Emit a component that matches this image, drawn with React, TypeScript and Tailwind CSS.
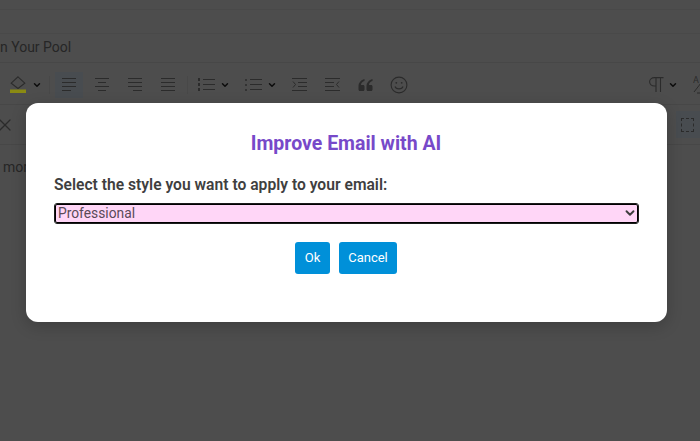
import { ChevronDown, X } from 'lucide-react';

const ink = '#2b2b2b';

function Lines({ widths, align = 'start' }: { widths: number[]; align?: 'start' | 'center' | 'end' }) {
    const alignClass = align === 'center' ? 'items-center' : align === 'end' ? 'items-end' : 'items-start';
    return (
        <div className={`flex flex-col gap-[3px] w-[14px] ${alignClass}`}>
            {widths.map((w, i) => (
                <div key={i} className="h-px bg-[#2b2b2b]" style={{ width: w }} />
            ))}
        </div>
    );
}

function Caret({ className }: { className?: string }) {
    return <ChevronDown size={10} strokeWidth={3.5} color="#0c0c0c" className={className} />;
}

function ListIcon({ numbered }: { numbered?: boolean }) {
    return (
        <div className="flex flex-col gap-[3px] w-[17px]">
            {[0, 1, 2].map((i) => (
                <div key={i} className="flex items-center gap-[3px] h-[2px]">
                    <div className={numbered ? 'w-[2px] h-[3px] bg-[#2b2b2b]' : 'w-[2px] h-[2px] rounded-full bg-[#2b2b2b]'} />
                    <div className="h-px w-[12px] bg-[#2b2b2b]" />
                </div>
            ))}
        </div>
    );
}

function IndentIcon({ flip }: { flip?: boolean }) {
    return (
        <svg width="15" height="13" viewBox="0 0 15 13" fill="none" stroke={ink} strokeWidth="1">
            <path d="M0 .5H15M0 12.5H15" />
            {flip ? <path d="M0 4.5H9M0 8.5H9M14 3.5L11.5 6.5L14 9.5" /> : <path d="M6 4.5H15M6 8.5H15M1 3.5L3.5 6.5L1 9.5" />}
        </svg>
    );
}

function Toolbar() {
    return (
        <div className="h-[40px] shrink-0 flex items-center pl-[10px] border-b border-[#474747]">
            <svg width="16" height="17" viewBox="0 0 16 17" fill="none" stroke={ink} strokeWidth="1.1" className="shrink-0">
                <path d="M8 .8L14.8 7.2L8 12.5L1.2 7.2Z" />
                <rect x="0" y="13.5" width="16" height="3.5" fill="#8a8a12" stroke="none" />
            </svg>
            <Caret className="ml-[6px]" />
            <div className="w-px h-[18px] bg-[#484848] ml-[7px]" />
            <div className="ml-[5px] w-[28px] h-[26px] bg-[#484c50] flex items-center justify-center">
                <Lines widths={[14, 14, 14, 9]} />
            </div>
            <div className="ml-[5px] w-[28px] flex justify-center">
                <Lines widths={[14, 8, 14, 8]} align="center" />
            </div>
            <div className="ml-[5px] w-[28px] flex justify-center">
                <Lines widths={[14, 14, 14, 9]} align="end" />
            </div>
            <div className="ml-[5px] w-[28px] flex justify-center">
                <Lines widths={[14, 14, 14, 14]} />
            </div>
            <div className="w-px h-[18px] bg-[#484848] ml-[5px]" />
            <div className="ml-[10px]"><ListIcon numbered /></div>
            <Caret className="ml-[5px]" />
            <div className="ml-[15px]"><ListIcon /></div>
            <Caret className="ml-[5px]" />
            <div className="ml-[15px]"><IndentIcon /></div>
            <div className="ml-[18px]"><IndentIcon flip /></div>
            <svg width="15" height="12" viewBox="0 0 15 12" fill={ink} className="ml-[18px] shrink-0">
                <path d="M6.5 0C3 1 .5 3.5.5 7.5V10.5C.5 11.3 1 12 2 12H5C6 12 6.5 11.3 6.5 10.5V7.5C6.5 6.7 6 6 5 6H3C3 4 4.5 2.5 6.5 2Z" />
                <path d="M14.5 0C11 1 8.5 3.5 8.5 7.5V10.5C8.5 11.3 9 12 10 12H13C14 12 14.5 11.3 14.5 10.5V7.5C14.5 6.7 14 6 13 6H11C11 4 12.5 2.5 14.5 2Z" />
            </svg>
            <svg width="18" height="18" viewBox="0 0 18 18" fill="none" stroke={ink} strokeWidth="1.1" className="ml-[17px] shrink-0">
                <circle cx="9" cy="9" r="7.9" />
                <path d="M5 10.5C6 13.7 12 13.7 13 10.5" />
                <circle cx="6.3" cy="6.8" r=".9" fill={ink} stroke="none" />
                <circle cx="11.7" cy="6.8" r=".9" fill={ink} stroke="none" />
            </svg>
            <div className="flex-1" />
            <svg width="15" height="15" viewBox="0 0 15 15" fill="none" stroke={ink} strokeWidth="1.1" className="shrink-0">
                <path d="M14.5 .6H5.5C2.7 .6 .6 2.5 .6 4.8C.6 7.1 2.7 9 5.5 9H7M7 .6V15M11.5 .6V15" />
            </svg>
            <Caret className="ml-[4px]" />
            <div className="relative ml-[15px] mr-[-3px] w-[10px] h-[18px] shrink-0 overflow-hidden">
                <span className="absolute left-0 top-[-1px] text-[9px] leading-[10px] text-[#2b2b2b]">A</span>
                <svg width="10" height="18" viewBox="0 0 10 18" fill="none" stroke={ink} strokeWidth="1" className="absolute left-0 top-0">
                    <path d="M8 7L1 16M4 17H10" />
                </svg>
            </div>
        </div>
    );
}

export default function App() {
    return (
        <div className="relative w-[700px] h-[441px] overflow-hidden bg-[#4d4d4d] font-['Roboto',sans-serif]">
            <div className="flex flex-col h-full">
                <div className="h-[10px] shrink-0 border-b border-[#494949]" />
                <div className="h-[24px] shrink-0 border-b border-[#494949]" />
                <div className="h-[29px] shrink-0 pb-[2px] border-b border-[#474747] flex items-center text-[14px] text-[#262626]">
                    <span className="ml-[-8px] whitespace-nowrap">on Your Pool</span>
                </div>
                <div className="h-[2px] shrink-0" />
                <Toolbar />
                <div className="h-[40px] shrink-0 border-b border-[#474747] flex items-center justify-between">
                    <X size={20} strokeWidth={1.5} color={ink} className="ml-[-5px]" />
                    <div className="w-[24px] h-[27px] bg-[#484c50] flex items-center">
                        <div className="ml-[5px] w-[13px] h-[14px] border border-dashed border-[#2b2b2b]" />
                    </div>
                </div>
                <div className="pt-[12px] pl-[3px] text-[14px] text-[#262626]">more</div>
            </div>

            <div className="absolute left-[26px] top-[103px] w-[641px] h-[219px] bg-white rounded-[12px] shadow-[0_4px_16px_rgba(0,0,0,0.2)] flex flex-col items-center pt-[27px]">
                <h2 className="text-[19.5px] leading-[28px] font-bold text-[#7749c9] mr-[1px]">Improve Email with AI</h2>
                <label className="self-start ml-[28px] mt-[15px] text-[15.65px] leading-[24px] font-semibold text-[#3f3f3f]">
                    Select the style you want to apply to your email:
                </label>
                <div className="relative self-start ml-[29px] mt-[7px] w-[583px] h-[19px]">
                    <select
                        defaultValue="Professional"
                        className="appearance-none block w-full h-full pl-[2px] rounded-[2px] border border-black outline outline-[#1c1c1c] bg-[#ffd6f7] text-[13.8px] leading-[17px] text-[#5a4a58] font-['Roboto',sans-serif]"
                    >
                        <option>Professional</option>
                        <option>Casual</option>
                        <option>Friendly</option>
                    </select>
                    <ChevronDown size={14} strokeWidth={3.2} color="#3d3d3d" className="absolute right-[1px] top-[2px] pointer-events-none" />
                </div>
                <div className="flex gap-[9px] mt-[19px] mr-[1px]">
                    <button className="w-[35px] h-[32px] rounded-[3px] bg-[#0090d9] text-white text-[13px]">Ok</button>
                    <button className="w-[58px] h-[32px] rounded-[3px] bg-[#0090d9] text-white text-[13px]">Cancel</button>
                </div>
            </div>
        </div>
    );
}
